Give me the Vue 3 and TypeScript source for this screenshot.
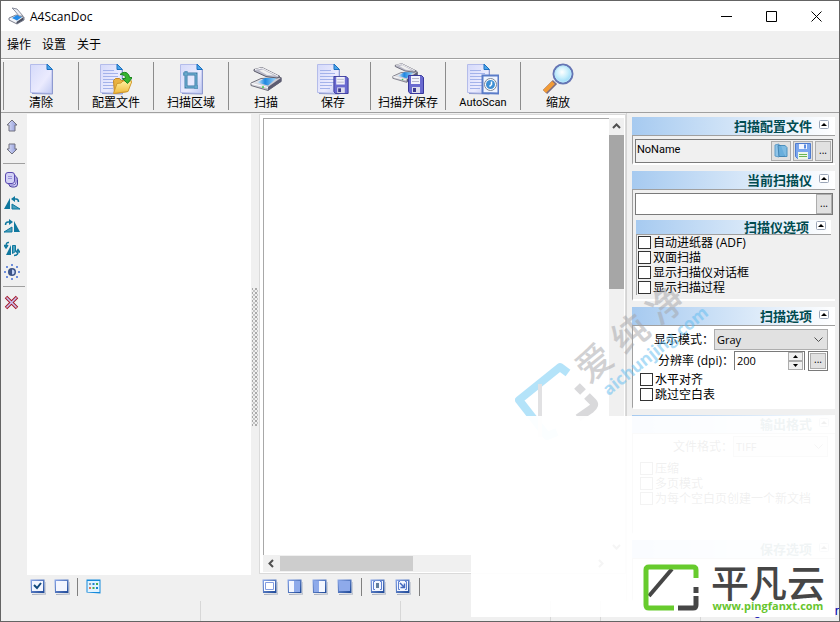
<script setup lang="ts">
import { ref } from 'vue'

interface Tool { icon: string; label: string; kind?: string }

const menus = ['操作', '设置', '关于']
const tools: Tool[] = [
  { icon: 'page', label: '清除' },
  { icon: 'profile', label: '配置文件' },
  { icon: 'area', label: '扫描区域' },
  { icon: 'scanner', label: '扫描' },
  { icon: 'save', label: '保存', kind: 'joined' },
  { icon: 'scansave', label: '扫描并保存' },
  { icon: 'auto', label: 'AutoScan', kind: 'latin' },
  { icon: 'zoom', label: '缩放' },
]
const sideGroups = [
  [{ icon: 'up', label: '上移' }, { icon: 'down', label: '下移' }],
  [
    { icon: 'pages', label: '全部页面' },
    { icon: 'rotl', label: '向左旋转' },
    { icon: 'rotr', label: '向右旋转' },
    { icon: 'flip', label: '翻转' },
    { icon: 'bright', label: '亮度' },
  ],
  [{ icon: 'del', label: '删除' }],
]
const listGroups = [['check', 'blank'], ['thumbs']]
const viewGroups = [['v1', 'v2', 'v3', 'v4'], ['fit', 'real'], []]

const scannerOptions = ref([
  { id: 'adf', label: '自动进纸器 (ADF)', on: false },
  { id: 'duplex', label: '双面扫描', on: false },
  { id: 'dialog', label: '显示扫描仪对话框', on: false },
  { id: 'progress', label: '显示扫描过程', on: false },
])
const scanOptions = ref([
  { id: 'deskew', label: '水平对齐', on: false },
  { id: 'skip', label: '跳过空白表', on: false },
])
const outputOptions = ref([
  { id: 'compress', label: '压缩', on: false },
  { id: 'multi', label: '多页模式', on: false },
  { id: 'split', label: '为每个空白页创建一个新文档', on: false },
])
const scanner = ref('')
const mode = ref('Gray')
const format = ref('TIFF')
const dpi = ref(200)
</script>

<template>
  <div class="window">
    <svg class="sprite" width="0" height="0" aria-hidden="true">
      <defs>
        <linearGradient id="gPage" x1="0" y1="0" x2="1" y2="1">
          <stop offset="0" stop-color="#d5dafa" /><stop offset=".6" stop-color="#ebebfe" /><stop offset="1" stop-color="#c0c9f2" />
        </linearGradient>
        <linearGradient id="gGlass" x1="0" y1="0" x2="1" y2="0">
          <stop offset="0" stop-color="#e4f4fe" /><stop offset=".4" stop-color="#1d86e0" /><stop offset="1" stop-color="#a8dcfb" />
        </linearGradient>
        <linearGradient id="gLid" x1="0" y1="0" x2="1" y2="1">
          <stop offset="0" stop-color="#f4f4f8" /><stop offset="1" stop-color="#a8a8b4" />
        </linearGradient>
        <linearGradient id="gFold" x1="0" y1="0" x2="0" y2="1">
          <stop offset="0" stop-color="#fff0a0" /><stop offset="1" stop-color="#f0b83c" />
        </linearGradient>
        <linearGradient id="gTile" x1="0" y1="0" x2="1" y2="1">
          <stop offset="0" stop-color="#8eaaea" /><stop offset="1" stop-color="#1c4796" />
        </linearGradient>
        <radialGradient id="gLens" cx=".45" cy=".4" r=".6">
          <stop offset="0" stop-color="#ffffff" /><stop offset=".5" stop-color="#c9effc" /><stop offset="1" stop-color="#8fd6f8" />
        </radialGradient>
        <linearGradient id="gArrow" x1="0" y1="0" x2="1" y2="0">
          <stop offset="0" stop-color="#dfe3fb" /><stop offset="1" stop-color="#8d98d8" />
        </linearGradient>
      </defs>
      <symbol id="sheet" viewBox="0 0 32 32">
        <path d="M5.500 1.500H22l5 5V30.500l-21.500-1z" fill="url(#gPage)" stroke="#b4bcea" />
        <path d="M27.500 7v24L7 30.500" fill="none" stroke="#8e9ad0" />
        <path d="M22 1l5.500 5.500H22z" fill="#4aa4ea" stroke="#1c70c0" />
      </symbol>
      <symbol id="lines" viewBox="0 0 32 32">
        <path d="M8 7.500h11M8 10.500h15M8 13.500h15M8 16.500h15M8 19.500h15M8 22.500h12M8 25.500h10" stroke="#a3b2ea" />
      </symbol>
      <symbol id="disk" viewBox="0 0 16 19">
        <path d="M.5.500h13l2 2v16H2l-1.500-2z" fill="#6a6ad0" stroke="#39399c" />
        <path d="M3 1h9v8H3z" fill="#f2f2fb" /><path d="M4 3.500h7M4 6.500h7" stroke="#b7b7cc" />
        <path d="M4 12h8v6H4z" fill="#dcdcec" /><path d="M5 13h3v4H5z" fill="#3a3a90" />
      </symbol>
      <symbol id="scanner" viewBox="0 0 32 32">
        <path d="M1 20l10-4.500 20-1v4L18 27.500 1 22.500z" fill="url(#gLid)" stroke="#70707c" />
        <path d="M7 19.500l8-4.500h12l-9 7.500z" fill="url(#gGlass)" />
        <path d="M31.500 14.500v4L18 27.500V24z" fill="#5c5c72" />
        <path d="M1.500 20.500L18 24.500" fill="none" stroke="#fff" />
        <path d="M4 6.500l8-2 18 9-3 1.500-11-1.500L4 8z" fill="#b9b9c8" stroke="#5c5c6c" />
        <path d="M9 7.500l4-1 11 6-7-.500z" fill="#f0f0f0" />
        <path d="M5 6.500l7-1.500 16 8" fill="none" stroke="#fff" />
        <circle cx="13" cy="24" r="1" fill="#4cc84c" />
      </symbol>
      <symbol id="page" viewBox="0 0 32 32"><use href="#sheet" /></symbol>
      <symbol id="profile" viewBox="0 0 32 32">
        <use href="#sheet" x="-5" /><use href="#lines" x="-5" />
        <path d="M13.500 17.500l2-2h4l2 2h8l-2 11-13 2z" fill="#e9b242" stroke="#c48722" />
        <path d="M13.500 30.500l3.500-10 4-.500 2-2h9L28 28.500z" fill="url(#gFold)" stroke="#d29b2e" />
        <path d="M20 11.500c4-4 9-2 9.500 3h3l-5 6-5-5h3c0-3-2-4-5.500-4z" fill="#36b52f" stroke="#1c8420" />
      </symbol>
      <symbol id="area" viewBox="0 0 32 32">
        <use href="#sheet" />
        <path d="M11 8v16h12M8 11h13v15" fill="none" stroke="#3f7da8" stroke-width="3" />
        <path d="M11 8v16h12M8 11h13v15" fill="none" stroke="#79b8d8" />
      </symbol>
      <symbol id="save" viewBox="0 0 32 32">
        <use href="#sheet" x="-5" /><use href="#lines" x="-5" /><use href="#disk" x="16" y="13" width="16" height="18" />
      </symbol>
      <symbol id="scansave" viewBox="0 0 32 32">
        <use href="#scanner" x="0" y="-3" width="26" height="26" /><use href="#disk" x="16" y="12" width="16" height="19" />
      </symbol>
      <symbol id="auto" viewBox="0 0 32 32">
        <use href="#sheet" x="-5" /><use href="#lines" x="-5" />
        <path d="M15.500 12.500h16v18l-16-.500z" fill="#f0f5ff" stroke="#5a7cc8" stroke-width="2" />
        <circle cx="23.500" cy="21.500" r="6" fill="#fff" stroke="#7d8694" />
        <circle cx="23.500" cy="21.500" r="4.500" fill="#3d8fd4" />
        <path d="M24.500 18.500v3l-2 2" fill="none" stroke="#fff" stroke-width="1.500" />
      </symbol>
      <symbol id="zoom" viewBox="0 0 32 32">
        <path d="M3 29l10-10" stroke="#7e6d80" stroke-width="6" />
        <path d="M2.500 28.500l9-9" stroke="#f19a36" stroke-width="4" />
        <circle cx="21" cy="11" r="9.500" fill="url(#gLens)" stroke="#6575b4" stroke-width="2" />
        <circle cx="21" cy="11" r="8" fill="none" stroke="#b9e7fa" />
      </symbol>
      <symbol id="up" viewBox="0 0 16 16"><path d="M8 2l5 5h-2v6H5V7H3z" fill="url(#gArrow)" stroke="#71717e" /></symbol>
      <symbol id="down" viewBox="0 0 16 16"><path d="M8 13l5-5h-2V3H5v5H3z" fill="url(#gArrow)" stroke="#71717e" /></symbol>
      <symbol id="pages" viewBox="0 0 16 16">
        <rect x="5" y="4.500" width="8.500" height="10.500" rx="3" fill="#cfcdf6" stroke="#4b3f9e" />
        <rect x="3.500" y="2.500" width="8.500" height="10.500" rx="3" fill="#e4e2fb" stroke="#7468c2" />
        <rect x="1.500" y=".5" width="9" height="11" rx="2.500" fill="#d3d2f6" stroke="#5a4bb0" />
        <path d="M4 4.500h4M4 6.500h4" stroke="#9b94da" />
      </symbol>
      <symbol id="rotl" viewBox="0 0 16 16">
        <path d="M6 3v11H0z" fill="#0f779e" /><path d="M8 9v5h8z" fill="#4ba1bd" stroke="#0f779e" />
        <path d="M9 4h3q2.500 0 2.500 3" fill="none" stroke="#0f779e" stroke-width="1.500" /><path d="M7 4l4-3v6z" fill="#0f779e" />
      </symbol>
      <symbol id="rotr" viewBox="0 0 16 16">
        <path d="M10 3v11h6z" fill="#0f779e" /><path d="M8 9v5H0z" fill="#4ba1bd" stroke="#0f779e" />
        <path d="M7 4H4Q1.500 4 1.500 7" fill="none" stroke="#0f779e" stroke-width="1.500" /><path d="M9 4L5 1v6z" fill="#0f779e" />
      </symbol>
      <symbol id="flip" viewBox="0 0 16 16">
        <path d="M7 4v10H2z" fill="#0f779e" /><path d="M8.500 4.500h3v6l-3 2z" fill="#4ba1bd" stroke="#0f779e" />
        <path d="M5 1.500Q2 1 2 5M0 4l2 3 2-3M10 14.500q4 0 4-4M12 11.500l2-3 2 3" fill="none" stroke="#0f779e" stroke-width="1.500" />
      </symbol>
      <symbol id="bright" viewBox="0 0 16 16">
        <path d="M7 0h2v2H7zM7 14h2v2H7zM0 7h2v2H0zM14 7h2v2h-2zM2 2h2v2H2zM12 2h2v2h-2zM2 12h2v2H2zM12 12h2v2h-2z" fill="#6f8fdc" />
        <circle cx="8" cy="8" r="4" fill="#3c5488" /><path d="M8 5.500a2.500 2.500 0 0 1 0 5z" fill="#c4d4f4" />
      </symbol>
      <symbol id="del" viewBox="0 0 16 16">
        <path d="M2 2l11 11M13 2L2 13" stroke="#a51626" stroke-width="3.500" /><path d="M2.500 2.500l10 10M12.500 2.500l-10 10" stroke="#c9c4f4" stroke-width="1.500" />
      </symbol>
      <symbol id="tile" viewBox="0 0 16 16">
        <path d="M2 15.500l14-.500V3" fill="none" stroke="#a8b0c0" /><path d="M.5.500h14V14L1 14z" fill="url(#gTile)" />
      </symbol>
      <symbol id="blank" viewBox="0 0 16 16"><use href="#tile" /><path d="M2 2h11v10H2z" fill="#f3f6ff" /></symbol>
      <symbol id="check" viewBox="0 0 16 16"><use href="#blank" /><path d="M4 6l3 3 4-5" fill="none" stroke="#124a7c" stroke-width="2" /></symbol>
      <symbol id="thumbs" viewBox="0 0 16 16">
        <path d="M.5.500h14v14l-14-1z" fill="#168bdc" /><path d="M1.500 2h12v11h-12z" fill="#e2f3ff" />
        <path d="M3 4h2v2H3z" fill="#8a9fb0" /><path d="M6.500 4h2v2h-2zM10 8h2v2h-2z" fill="#1880d0" /><path d="M10 4h2v2h-2zM6.500 8h2v2h-2z" fill="#45aa52" /><path d="M3 8h2v2H3z" fill="#e07855" />
      </symbol>
      <symbol id="v1" viewBox="0 0 16 16"><use href="#tile" /><path d="M2 2h11v10H2z" fill="#fff" /><path d="M3.500 3.500h8v7h-8z" fill="none" stroke="#829ce0" /></symbol>
      <symbol id="v2" viewBox="0 0 16 16"><use href="#tile" /><path d="M2 2h5v11H2z" fill="#f4f7ff" /><path d="M7 2h6v11H7z" fill="#8eaaea" /></symbol>
      <symbol id="v3" viewBox="0 0 16 16"><use href="#tile" /><path d="M2 2h5v11H2z" fill="#8eaaea" /><path d="M7 2h6v11H7z" fill="#f4f7ff" /></symbol>
      <symbol id="v4" viewBox="0 0 16 16"><use href="#tile" /><path d="M2 2h11v10H2z" fill="#8eaaea" /></symbol>
      <symbol id="fit" viewBox="0 0 16 16"><use href="#blank" /><path d="M5 2.500H3.500v8H5M10 2.500h1.500v8H10" fill="none" stroke="#5c7fd0" /><path d="M6 4h3v5H6z" fill="#617d9c" /></symbol>
      <symbol id="real" viewBox="0 0 16 16"><use href="#blank" /><path d="M5 2.500H3.500v8H5M10 2.500h1.500v8H10" fill="none" stroke="#5c7fd0" /><path d="M5 4l4 4M9.500 4.500v4h-4" fill="none" stroke="#4268be" stroke-width="1.500" /></symbol>
      <symbol id="appicon" viewBox="0 0 18 18">
        <path d="M1 11l7-3 8 2v3l-7 4-8-4z" fill="#f2f4f8" stroke="#7e8290" /><path d="M4 11l5-3 5 2-5 3.500z" fill="#248be8" />
        <path d="M4 1l5 1 6 7H11L7 4z" fill="#eceef5" stroke="#8a8e9c" /><path d="M15.500 10v3l-7 4v-2z" fill="#4a4f60" />
      </symbol>
      <symbol id="fold" viewBox="0 0 10 10">
        <rect x=".5" y=".5" width="9" height="8" rx="1" fill="#fff" stroke="#9ba6b8" /><path d="M2 6l3-3 3 3z" fill="#000" />
      </symbol>
    </svg>

    <header class="title">
      <svg class="app-icon"><use href="#appicon" /></svg>
      <h1>A4ScanDoc</h1>
      <button aria-label="最小化"><svg viewBox="0 0 11 11"><path d="M0 5.500h11" /></svg></button>
      <button aria-label="最大化"><svg viewBox="0 0 11 11"><path d="M.5.500h10v10H.5z" /></svg></button>
      <button aria-label="关闭"><svg viewBox="0 0 11 11"><path d="M.5.500l10 10M10.500.500l-10 10" /></svg></button>
    </header>

    <nav class="menu"><button v-for="m in menus" :key="m">{{ m }}</button></nav>

    <div class="tools">
      <button v-for="t in tools" :key="t.icon" :class="t.kind">
        <svg><use :href="'#' + t.icon" /></svg><span>{{ t.label }}</span>
      </button>
    </div>

    <main class="body">
      <aside class="side">
        <div v-for="(g, i) in sideGroups" :key="i" class="side-group">
          <button v-for="b in g" :key="b.icon" :aria-label="b.label"><svg><use :href="'#' + b.icon" /></svg></button>
        </div>
      </aside>

      <section class="list">
        <div class="list-view"></div>
        <div class="strip list-strip">
          <div v-for="(g, i) in listGroups" :key="i" class="strip-group">
            <button v-for="b in g" :key="b" :aria-label="b"><svg><use :href="'#' + b" /></svg></button>
          </div>
        </div>
      </section>

      <div class="splitter"><i></i></div>

      <section class="viewer">
        <div class="frame">
          <div class="canvas"></div>
          <div class="vbar">
            <svg viewBox="0 0 9 9"><path d="M1 6l3.500-3.500L8 6" /></svg>
            <i></i><b></b>
            <svg viewBox="0 0 9 9"><path d="M1 3l3.500 3.500L8 3" /></svg>
          </div>
          <div class="hbar">
            <svg viewBox="0 0 9 9"><path d="M6 1L2.500 4.500 6 8" /></svg>
            <i></i><b></b>
            <svg viewBox="0 0 9 9"><path d="M3 1l3.500 3.500L3 8" /></svg>
          </div>
        </div>
        <div class="strip">
          <div v-for="(g, i) in viewGroups" :key="i" class="strip-group">
            <button v-for="b in g" :key="b" :aria-label="b"><svg><use :href="'#' + b" /></svg></button>
          </div>
        </div>
      </section>

      <aside class="panel">
        <section class="group">
          <h2>扫描配置文件<button aria-label="折叠"><svg><use href="#fold" /></svg></button></h2>
          <div class="inner">
            <div class="field profile">
              <span>NoName</span>
              <button aria-label="打开">
                <svg viewBox="0 0 16 16"><path d="M2 2l4-1v13l-4-1z" fill="#8fc4e8" stroke="#5f9cc8" /><path d="M5 2.500h7v11H6z" fill="#68aedc" stroke="#4586b4" /><path d="M8 2.500h4l2 2v9h-2" fill="#7fbbe2" stroke="#4d91be" /></svg>
              </button>
              <button aria-label="保存">
                <svg viewBox="0 0 16 16"><path d="M.5.500h15v15h-13l-2-2z" fill="#7ba6ee" stroke="#4f7cd0" /><path d="M4 1h8v5H4z" fill="#f4f7ff" /><path d="M9 1.500h2v4H9z" fill="#5b8be0" /><path d="M3 9h10v7H3z" fill="#eef7e8" /><path d="M4 11h8v1H4zM4 13h8v1H4z" fill="#6bb552" /></svg>
              </button>
              <button class="more" aria-label="更多">...</button>
            </div>
          </div>
        </section>

        <section class="group">
          <h2>当前扫描仪<button aria-label="折叠"><svg><use href="#fold" /></svg></button></h2>
          <div class="inner nest">
            <div class="field device">
              <input v-model="scanner" aria-label="当前扫描仪" />
              <button class="more" aria-label="选择扫描仪">...</button>
            </div>
            <section class="sub">
              <h2>扫描仪选项<button aria-label="折叠"><svg><use href="#fold" /></svg></button></h2>
              <div class="checks">
                <label v-for="o in scannerOptions" :key="o.id" :for="o.id"><input :id="o.id" v-model="o.on" type="checkbox" />{{ o.label }}</label>
              </div>
            </section>
          </div>
        </section>

        <section class="group">
          <h2>扫描选项<button aria-label="折叠"><svg><use href="#fold" /></svg></button></h2>
          <div class="inner white">
            <div class="row">
              <label for="mode">显示模式：</label>
              <div class="select wide">
                <select id="mode" v-model="mode"><option>Gray</option></select>
                <svg viewBox="0 0 9 9"><path d="M.5 2.500l4 4 4-4" /></svg>
              </div>
            </div>
            <div class="row">
              <label for="dpi">分辨率 (dpi)：</label>
              <div class="spin">
                <input id="dpi" v-model.number="dpi" type="text" />
                <div class="steps">
                  <button aria-label="增加" @click="dpi++"><svg viewBox="0 0 7 5"><path d="M1 4l2.500-3L6 4z" /></svg></button>
                  <button aria-label="减少" @click="dpi--"><svg viewBox="0 0 7 5"><path d="M1 1l2.500 3L6 1z" /></svg></button>
                </div>
              </div>
              <div class="field pick"><button class="more" aria-label="选择分辨率">...</button></div>
            </div>
            <div class="checks">
              <label v-for="o in scanOptions" :key="o.id" :for="o.id"><input :id="o.id" v-model="o.on" type="checkbox" />{{ o.label }}</label>
            </div>
          </div>
        </section>

        <section class="group">
          <h2>输出格式<button aria-label="折叠"><svg><use href="#fold" /></svg></button></h2>
          <div class="inner white output">
            <div class="row">
              <label for="format">文件格式：</label>
              <div class="select narrow">
                <select id="format" v-model="format"><option>TIFF</option></select>
                <svg viewBox="0 0 9 9"><path d="M.5 2.500l4 4 4-4" /></svg>
              </div>
            </div>
            <div class="checks">
              <label v-for="o in outputOptions" :key="o.id" :for="o.id"><input :id="o.id" v-model="o.on" type="checkbox" />{{ o.label }}</label>
            </div>
          </div>
        </section>

        <section class="group last">
          <h2>保存选项<button aria-label="折叠"><svg><use href="#fold" /></svg></button></h2>
          <div class="inner white"></div>
        </section>
      </aside>
    </main>

    <footer class="status">
      <span class="s1"></span><span class="s1"></span><span class="s2"></span><span class="s3"></span><span class="s4"></span>
      <a href="#">using the latest ver</a>
    </footer>

    <svg class="mark" viewBox="0 0 210 160">
      <g fill="none" stroke-width="8">
        <path d="M58 92l-8-6L9 119l28 36 10-4" stroke="#6cc8f5" stroke-linejoin="round" />
        <path d="M67 105l6 6M77 115l6 6q3 3-2 7l-13 9" stroke="#b4b4b8" />
        <path d="M30 103v53" stroke="#c4c4c8" stroke-width="4" />
      </g>
      <g transform="translate(93 94) rotate(-39)">
        <text class="m1" x="-17" y="-2">爱</text><text class="m1" x="29" y="-2">纯</text><text class="m1" x="75" y="-2">净</text>
        <text class="m2" x="-9" y="20">aichunjing.com</text>
      </g>
    </svg>

    <div class="veil">
      <div class="brand">
        <svg viewBox="0 0 62 52">
          <g fill="none" stroke-width="5">
            <path d="M31 7L8 34" stroke="#464646" stroke-width="4" />
            <path d="M55 16V8q0-3-3-3H8Q5 5 5 8v35q0 3 3 3h25" stroke="#67cb2d" />
            <path d="M55 25v6M55 34v9q0 3-3 3H37" stroke="#464646" />
          </g>
        </svg>
        <div><strong>平凡云</strong><em>www.pingfanxt.com</em></div>
      </div>
    </div>
  </div>
</template>

<style>
body { margin: 0; background: #f0f0f0; }
</style>

<style scoped>
* { box-sizing: border-box; }
.window {
  position: relative;
  display: flex;
  flex-direction: column;
  min-height: 100vh;
  overflow: hidden;
  border: 1px solid #646464;
  background: #f0f0f0;
  color: #000;
  font: 12px/15px "Open Sans", "Noto Sans CJK SC", sans-serif;
}
.sprite { position: absolute; }
button { margin: 0; padding: 0; border: 0; background: none; color: inherit; font: inherit; }
input, select { margin: 0; font: inherit; color: inherit; border-radius: 0; }
svg { display: block; }

.title { display: flex; align-items: center; height: 30px; background: #fff; padding-left: 7px; }
.app-icon { width: 18px; height: 18px; }
.title h1 { flex: 1; margin: 0 0 0 4px; font-size: 12px; font-weight: 400; }
.title button { width: 45px; height: 30px; display: grid; place-items: center; }
.title button svg { width: 11px; height: 11px; fill: none; stroke: #000; }

.menu { display: flex; gap: 11px; height: 27px; padding-left: 6px; }

.tools { display: flex; height: 55px; padding: 3px 2px 2px; border-top: 1px solid #a0a0a0; border-bottom: 1px solid #a0a0a0; box-shadow: inset 0 1px #fff; }
.tools button { flex: 0 0 75px; display: flex; flex-direction: column; align-items: center; border-left: 1px solid #8c8c8c; white-space: nowrap; }
.tools button.joined { flex-basis: 67px; border-left: 0; padding-right: 7px; }
.tools svg { width: 32px; height: 32px; margin-top: 1px; }
.tools button.latin span { font-family: Roboto, sans-serif; font-size: 11px; }

.body { flex: 1; display: grid; grid-template-columns: 26px 224px 8px minmax(0, 1fr) 213px; }

.side { padding-top: 1px; }
.side-group { display: flex; flex-direction: column; margin: 0 2px; }
.side-group + .side-group { border-top: 1px solid #a0a0a0; padding-top: 4px; margin-top: 3px; }
.side-group button { height: 23px; display: grid; place-items: center; padding-right: 4px; }
.side-group svg { width: 16px; height: 16px; }

.list { display: flex; flex-direction: column; padding-top: 1px; }
.list-view { flex: 1; background: #fff; }
.strip { display: flex; height: 27px; padding: 4px 0 0 3px; }
.strip-group { display: flex; gap: 9px; height: 18px; }
.strip-group + .strip-group { border-left: 1px solid #808080; margin-left: 8px; padding-left: 8px; }
.strip svg { width: 16px; height: 16px; }
.list-strip { height: 26px; padding-top: 3px; }
.list-strip .strip-group { gap: 8px; }
.list-strip .strip-group + .strip-group { margin-left: 7px; }

.splitter { display: grid; place-items: center; }
.splitter i { width: 6px; height: 138px; background: conic-gradient(#8c8c8c 25%, transparent 0) 1px 0 / 4px 4px, conic-gradient(#b0b0b0 25%, transparent 0) 3px 2px / 4px 4px; opacity: .7; }

.viewer { display: flex; flex-direction: column; padding-top: 1px; }
.frame { flex: 1; display: grid; grid-template-columns: minmax(0, 1fr) 15px; grid-template-rows: minmax(0, 1fr) 17px; background: #fff; border: 1px solid #dadada; padding: 3px 1px 1px 3px; }
.canvas { border-top: 1px solid #a8a8a8; border-left: 1px solid #a8a8a8; }
.vbar, .hbar { display: flex; align-items: center; background: #f0f0f0; }
.vbar { flex-direction: column; }
.vbar svg, .hbar svg { width: 9px; height: 9px; fill: none; stroke: #505050; stroke-width: 2; margin: 4px; }
.vbar i { width: 15px; flex: 155; background: #a6a6a6; }
.vbar b { flex: 250; }
.hbar i { height: 15px; flex: 134; background: #cdcdcd; }
.hbar b { flex: 180; }

.panel { padding: 4px 4px 0 5px; border-left: 1px solid #d4d4d4; display: flex; flex-direction: column; gap: 6px; }
h2 { display: flex; align-items: center; justify-content: flex-end; gap: 7px; height: 19px; margin: 0; padding-right: 6px; border-bottom: 1px solid #a0a0a0; background: linear-gradient(90deg, #a6caf0, #fff); color: #004b50; font: 700 13px/18px "Open Sans", "Noto Sans CJK SC", sans-serif; }
h2 svg { width: 10px; height: 10px; margin-bottom: 2px; }
.inner { padding: 3px 2px 0; border-left: 1px solid #a0a0a0; border-bottom: 2px solid #fff; min-height: 27px; }
.field { display: flex; align-items: center; gap: 2px; border: 1px solid #7a7a7a; }
.field button { width: 20px; align-self: stretch; border: 1px solid #adadad; background: #e1e1e1; display: grid; place-items: center; }
.field svg { width: 16px; height: 16px; }
.field .more { width: 16px; line-height: 10px; padding-bottom: 3px; font-size: 10px; }
.profile { height: 24px; padding: 1px; }
.profile span { flex: 1; font: 11px/18px Roboto, sans-serif; align-self: flex-start; }
.device { height: 22px; background: #fff; padding-right: 0; }
.device input { flex: 1; min-width: 0; height: 18px; padding: 0 2px; border: 0; background: #fff; }
.nest { padding-bottom: 4px; }
.sub { margin: 5px 2px 0 1px; }
.sub h2 { height: 15px; padding-right: 5px; }
.sub .checks { border-left: 1px solid #a0a0a0; }
.checks { display: flex; flex-direction: column; }
.checks label { display: flex; align-items: center; gap: 2px; height: 15px; padding-left: 1px; white-space: nowrap; }
.checks input { appearance: none; width: 13px; height: 13px; border: 1px solid #333; background: #fff; }

.white { background: #fff; padding: 3px 7px 5px; }
.white .checks label { padding-left: 0; }
.row { display: flex; align-items: center; justify-content: flex-end; height: 21px; }
.row + .checks { margin-top: 1px; }
.select { position: relative; height: 21px; }
.wide { width: 114px; }
.narrow { width: 95px; }
.select select { appearance: none; width: 100%; height: 21px; padding: 0 2px; border: 1px solid #adadad; background: #e1e1e1; font-size: 11px; }
.select svg { position: absolute; right: 5px; top: 6px; width: 9px; height: 9px; fill: none; stroke: #505050; }
.spin { display: flex; width: 71px; height: 19px; border-top: 1px solid #7a7a7a; border-left: 1px solid #7a7a7a; margin-right: 3px; }
.spin input { flex: 1; min-width: 0; border: 0; padding: 0 2px 2px; background: #fff; font-size: 11px; }
.steps { display: flex; flex-direction: column; width: 17px; border-right: 1px solid #7a7a7a; padding-right: 1px; }
.steps button { flex: 1; border: 1px solid #adadad; background: #f0f0f0; display: grid; place-items: center; }
.steps svg { width: 7px; height: 5px; }
.pick { height: 20px; width: 20px; padding: 1px; }
.output { min-height: 100px; padding-top: 2px; }
.output .row + .checks { margin-top: 4px; }
.last { flex: 1; display: flex; flex-direction: column; }
.last .inner { flex: 1; }

.status { display: flex; align-items: center; height: 20px; overflow: hidden; }
.status span { height: 20px; border-right: 1px solid #d7d7d7; flex: none; }
.s1 { width: 200px; }
.s2 { width: 150px; }
.s3 { width: 50px; }
.s4 { width: 100px; }
.status a { flex: 1; text-align: right; color: #0000b0; text-decoration: none; white-space: nowrap; font: 13px/20px "Liberation Sans", sans-serif; }

.mark { position: absolute; right: 119px; top: 280px; width: 210px; height: 160px; opacity: .5; pointer-events: none; }
.m1 { font: 500 36px "Noto Sans CJK SC", sans-serif; fill: #a4a4a8; }
.m2 { font: 700 17px "Open Sans", sans-serif; fill: #5fbcf0; }

.veil { position: absolute; right: 4px; bottom: 4px; width: 364px; height: 201px; display: flex; align-items: flex-end; justify-content: flex-end; background: rgba(255, 255, 255, .94); pointer-events: none; }
.brand { display: flex; align-items: center; gap: 8px; padding: 0 10px 3px 4px; background: #fff; }
.brand svg { width: 62px; height: 52px; }
.brand div { display: flex; flex-direction: column; align-items: center; }
.brand strong { font: 500 38px/36px "Noto Sans CJK SC", sans-serif; color: #464646; }
.brand em { font: 700 11px/14px "Open Sans", sans-serif; color: #67c52d; }
</style>
